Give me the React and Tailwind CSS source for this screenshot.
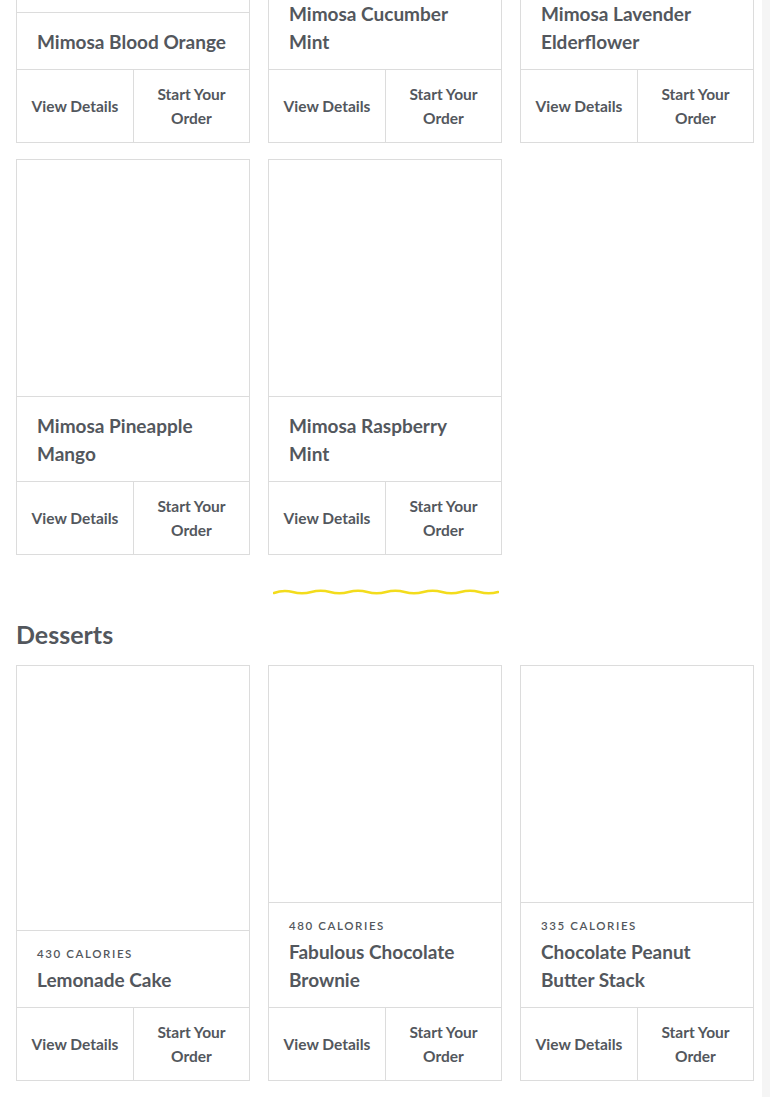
import React from 'react'

const mimosas = [
  { name: 'Mimosa Blood Orange' },
  { name: 'Mimosa Cucumber Mint' },
  { name: 'Mimosa Lavender Elderflower' },
  { name: 'Mimosa Pineapple Mango' },
  { name: 'Mimosa Raspberry Mint' },
]

const desserts = [
  { name: 'Lemonade Cake', calories: 430 },
  { name: 'Fabulous Chocolate Brownie', calories: 480 },
  { name: 'Chocolate Peanut Butter Stack', calories: 335 },
]

function Wave() {
  // six humps across 224px
  const w = 224
  const periods = 6
  const p = w / periods
  let d = `M 1 6`
  for (let i = 0; i < periods; i++) {
    const x = 1 + i * p
    d += ` Q ${x + p / 4} 2.5 ${x + p / 2} 5 T ${x + p} 5`
  }
  return (
    <svg width="226" height="10" viewBox="0 0 226 10" className="block">
      <path d={d} fill="none" stroke="#f3dc1c" strokeWidth="2.6" strokeLinecap="round" />
    </svg>
  )
}

function ProductCard({ item }) {
  return (
    <div className="flex flex-col border border-[#dcdcdc] bg-white">
      {/* image slot, empty */}
      <div className="min-h-[237px] flex-1 border-b border-[#dcdcdc]"></div>
      <div className="px-5 pt-[15px] pb-[13px]">
        {item.calories && (
          <p className="mb-1 text-[11.5px] leading-4 font-semibold uppercase tracking-[1.6px] text-[#53575d]">
            {item.calories} Calories
          </p>
        )}
        <h3 className="text-[19px] leading-7 font-bold text-[#53575d]">{item.name}</h3>
      </div>
      <div className="grid grid-cols-2 border-t border-[#dcdcdc]">
        <button className="flex h-[72px] items-center justify-center px-3 text-center text-[15.5px] leading-6 font-bold text-[#53575d]">
          View Details
        </button>
        <button className="flex h-[72px] items-center justify-center border-l border-[#dcdcdc] px-3 text-center text-[15.5px] leading-6 font-bold text-[#53575d]">
          Start Your Order
        </button>
      </div>
    </div>
  )
}

export default function App() {
  return (
    <div
      className="flex h-[1097px] w-[770px] overflow-hidden bg-white"
      style={{ fontFamily: 'Lato, "Open Sans", sans-serif' }}
    >
      <div className="flex-1">
        <div className="mt-[-253px] pl-4">
          {/* Mimosas */}
          <div className="grid grid-cols-[234px_234px_234px] gap-x-[18px] gap-y-4">
            {mimosas.map((m) => (
              <ProductCard key={m.name} item={m} />
            ))}
          </div>

          <div className="flex pt-[32px] pl-[257px]">
            <Wave />
          </div>

          {/* Desserts */}
          <h2 className="mt-[21px] mb-[15px] text-[25px] leading-8 font-bold text-[#53575d]">Desserts</h2>
          <div className="grid grid-cols-[234px_234px_234px] gap-x-[18px] gap-y-4">
            {desserts.map((d) => (
              <ProductCard key={d.name} item={d} />
            ))}
          </div>
        </div>
      </div>
      <div className="w-2 bg-[#f5f5f5]"></div>
    </div>
  )
}
